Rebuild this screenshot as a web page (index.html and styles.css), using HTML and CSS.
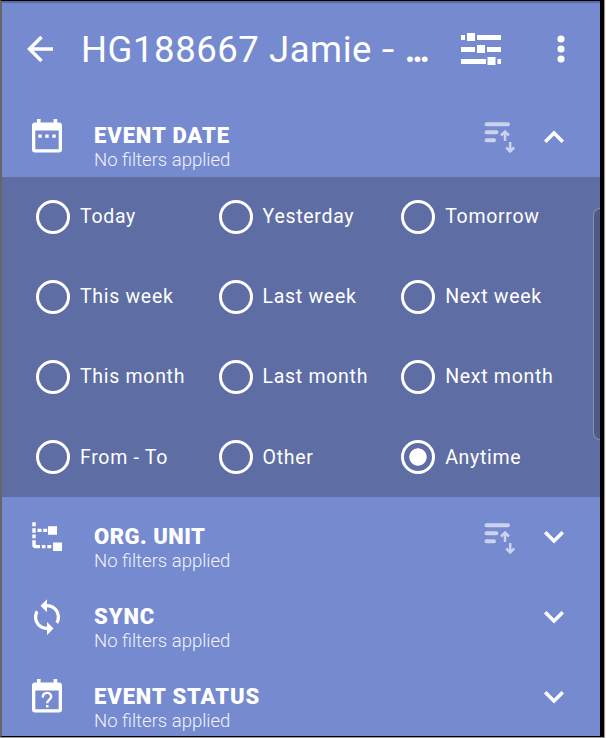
FILE: index.html
```html
<!DOCTYPE html>
<html lang="en">
<head>
<meta charset="utf-8">
<title>Event filters</title>
<link rel="stylesheet" href="styles.css">
</head>
<body>
<svg width="0" height="0" class="defs">
  <symbol id="sort" viewBox="0 0 32 32">
    <path d="M2.500 3.2H24M2.500 11.3H12.500M2.500 19.3H10" stroke-width="4" stroke-linecap="round"/>
    <path d="M21 20V11M17 14.5L21 10.5L25 14.5M26.2 21V30M22.2 26.500L26.2 30.500L30.2 26.500" stroke-width="2.5"/>
  </symbol>
  <symbol id="down" viewBox="0 0 20 13">
    <path d="M1.2 1.2L10 10L18.8 1.2" stroke-width="3.5"/>
  </symbol>
</svg>
<div class="screen">
  <header class="bar">
    <svg class="back" viewBox="0 0 28 28"><path d="M27 14H4M15.500 2L3.500 14L15.500 26" stroke-width="3.5"/></svg>
    <h1 class="title">HG188667 Jamie <span class="dash">-</span> <span class="dots">...</span></h1>
    <svg class="tune" viewBox="0 0 42 34"><path class="solid" d="M1 3h4v5H1zM7 1h8v8H7zM17 3h24v5H17zM1 15h14v5H1zM17 13h8v8H17zM27 15h14v5H27zM1 27h25v5H1zM27.500 25h8v8H27.500zM37.500 27h3.500v5H37.500z"/></svg>
    <svg class="more" viewBox="0 0 8 28"><circle cx="4" cy="4" r="3.600"/><circle cx="4" cy="14" r="3.600"/><circle cx="4" cy="24" r="3.600"/></svg>
  </header>

  <section class="row">
    <svg class="icon" viewBox="0 0 32 36"><path class="solid" fill-rule="evenodd" d="M6 1h3.600v3.500h13V1h3.600v3.500H28a3 3 0 0 1 3 3V31.500a3 3 0 0 1-3 3H4a3 3 0 0 1-3-3V7.500a3 3 0 0 1 3-3h2zM4.300 12.500v18.800h23.400V12.500zM7.300 16.500h3.400v3.200H7.300zM14.300 16.500h3.400v3.200h-3.400zM21.300 16.500h3.400v3.200h-3.400z"/></svg>
    <div class="label"><h2>EVENT DATE</h2><p>No filters applied</p></div>
    <svg class="sort"><use href="#sort"/></svg>
    <svg class="chev up"><use href="#down"/></svg>
  </section>

  <div class="options">
    <div class="opt"><i></i><span>Today</span></div>
    <div class="opt"><i></i><span>Yesterday</span></div>
    <div class="opt"><i></i><span>Tomorrow</span></div>
    <div class="opt"><i></i><span>This week</span></div>
    <div class="opt"><i></i><span>Last week</span></div>
    <div class="opt"><i></i><span>Next week</span></div>
    <div class="opt"><i></i><span>This month</span></div>
    <div class="opt"><i></i><span>Last month</span></div>
    <div class="opt"><i></i><span>Next month</span></div>
    <div class="opt"><i></i><span>From - To</span></div>
    <div class="opt"><i></i><span>Other</span></div>
    <div class="opt on"><i></i><span>Anytime</span></div>
    <div class="handle"></div>
  </div>

  <section class="row lower">
    <svg class="icon" viewBox="0 0 32 36"><path class="solid" d="M1.300 5h3.400v4H1.300zM1.300 11h3.400v4.500H1.300zM1.300 17.300h3.400v3.800H1.300zM6.500 11.600h4v3.200h-4zM12.200 11.600h4v3.200h-4zM17 9h9v8.500h-9zM1.300 23h3.400v3.500q0 1.200 1.200 1.200H9v3.300H4.500q-3.200 0-3.200-3.200zM10.800 27.700h3.700V31h-3.700zM16.300 27.700h4V31h-4zM22 25.300h9v8.500h-9z" transform="translate(0 -.8)"/></svg>
    <div class="label"><h2 class="org">ORG. UNIT</h2><p>No filters applied</p></div>
    <svg class="sort"><use href="#sort"/></svg>
    <svg class="chev"><use href="#down"/></svg>
  </section>

  <section class="row lower">
    <svg class="icon sync" viewBox="2.200 .9 19.600 22.100"><path class="solid" d="M12 4V1L8 5l4 4V6c3.310 0 6 2.690 6 6 0 1.010-.25 1.970-.7 2.800l1.460 1.460C19.540 15.030 20 13.570 20 12c0-4.420-3.580-8-8-8zm0 14c-3.310 0-6-2.690-6-6 0-1.010.25-1.970.7-2.800L5.240 7.740C4.460 8.970 4 10.430 4 12c0 4.420 3.580 8 8 8v3l4-4-4-4z"/></svg>
    <div class="label"><h2>SYNC</h2><p>No filters applied</p></div>
    <svg class="chev"><use href="#down"/></svg>
  </section>

  <section class="row lower">
    <svg class="icon" viewBox="0 0 32 36"><path class="solid" fill-rule="evenodd" d="M6 1h3.600v3.500h13V1h3.600v3.500H28a3 3 0 0 1 3 3V31.500a3 3 0 0 1-3 3H4a3 3 0 0 1-3-3V7.500a3 3 0 0 1 3-3h2zM4.300 12.500v18.800h23.400V12.500z"/><path d="M11.800 19.500C11.800 13.500 20.200 13.500 20.200 18.800C20.200 21.500 16.200 21.800 16.200 25.300" stroke-width="2.400"/><path class="solid" d="M15 27h2.500v2.500H15z"/></svg>
    <div class="label"><h2>EVENT STATUS</h2><p>No filters applied</p></div>
    <svg class="chev"><use href="#down"/></svg>
  </section>
</div>
</body>
</html>
```
FILE: styles.css
```css
* { box-sizing: border-box; margin: 0; padding: 0; }
body {
  width: 606px;
  height: 738px;
  overflow: hidden;
  background: #f4f4f4;
  font-family: Roboto, "Liberation Sans", sans-serif;
  color: #fff;
}
.defs { position: absolute; }
svg { flex: none; fill: none; stroke: #fff; }
svg .solid, .more { fill: #fff; stroke: none; }
.screen {
  width: 604px;
  height: 737px;
  overflow: hidden;
  background: #768ad0;
  border: solid #000;
  border-width: 1px 4px 1px 2px;
  border-left-color: #666;
  box-shadow: 0 0 0 1px #999, inset 0 2px #5b6ba8;
}
.bar { display: flex; align-items: center; height: 96px; padding-left: 24px; }
.back { width: 28px; height: 28px; }
.title {
  flex: none;
  width: 406px;
  padding-left: 27px;
  font-size: 36.5px;
  font-weight: 400;
  letter-spacing: .55px;
  white-space: nowrap;
}
.dash { display: inline-block; margin: 0 2px 0 1px; transform: scaleX(1.25); }
.dots { font-weight: 700; letter-spacing: -3.2px; }
.tune { width: 42px; height: 34px; }
.more { width: 8px; height: 28px; margin-left: 55px; }
.row { display: flex; height: 80px; padding: 0 36px 0 29px; }
.icon { width: 32px; height: 36px; margin-top: 21px; }
.label { flex: 1; padding: 26px 0 0 31px; white-space: nowrap; }
.lower .sync { margin-top: 22px; }
.lower .label { padding-top: 27px; }
h2 { font-size: 22px; line-height: 26px; font-weight: 900; letter-spacing: .9px; }
h2.org { letter-spacing: .5px; }
p { font-size: 18.5px; line-height: 23px; font-weight: 300; color: #f0f2fa; }
.sort { width: 32px; height: 32px; margin: 24px 28px 0 0; opacity: .62; }
.lower .sort { margin-top: 25px; }
.chev { width: 20px; height: 13px; margin-top: 34px; }
.row .up { margin-top: 33px; transform: rotate(180deg); }
.options {
  position: relative;
  display: grid;
  grid-template-columns: repeat(3, 182.600px);
  grid-auto-rows: 80.200px;
  height: 320px;
  padding-left: 34px;
  background: #5e6da4;
}
.opt { display: flex; align-items: center; gap: 10px; height: 79px; font-size: 19.5px; white-space: nowrap; letter-spacing: .7px; }
.opt i { width: 34px; height: 34px; border: 3px solid #fff; border-radius: 50%; }
.opt.on i { background: radial-gradient(circle, #fff 8.300px, transparent 9px); }
.handle {
  position: absolute;
  right: 0;
  top: 31px;
  width: 7px;
  height: 232px;
  background: #4f5b86;
  border: 1px solid #8b91aa;
  border-right: 0;
  border-radius: 7px 0 0 7px;
}
```
